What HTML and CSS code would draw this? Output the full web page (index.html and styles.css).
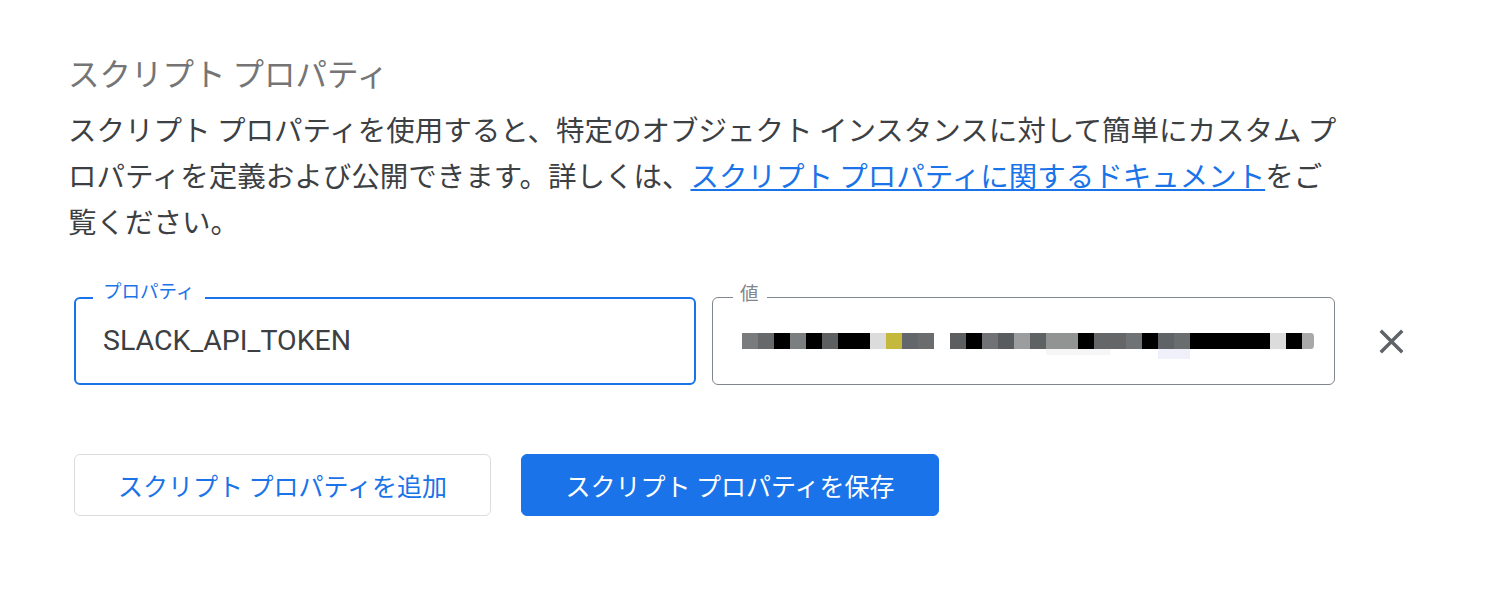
FILE: index.html
```html
<!DOCTYPE html>
<html lang="ja">
<head>
<meta charset="utf-8">
<title>スクリプト プロパティ</title>
<link rel="stylesheet" href="styles.css">
</head>
<body>
<main class="panel">
  <h2 class="title">スクリプト プロパティ</h2>
  <p class="desc">スクリプト プロパティを使用すると、特定のオブジェクト インスタンスに対して簡単にカスタム プ<br>ロパティを定義および公開できます。詳しくは、<a class="link" href="#">スクリプト プロパティに関するドキュメント</a>をご<br>覧ください。</p>

  <div class="row">
    <div class="field field-active">
      <span class="label label-active">プロパティ</span>
      <span class="field-text">SLACK_API_TOKEN</span>
    </div>
    <div class="field field-value">
      <span class="label label-value">値</span>
      <svg class="mosaic" width="572" height="26" viewBox="0 0 572 26" aria-hidden="true">
        <rect x="0" y="0" width="16" height="16" fill="#7a7b7d"/>
        <rect x="16" y="0" width="16" height="16" fill="#66686a"/>
        <rect x="32" y="0" width="16" height="16" fill="#000"/>
        <rect x="48" y="0" width="16" height="16" fill="#7c7f80"/>
        <rect x="64" y="0" width="16" height="16" fill="#000"/>
        <rect x="80" y="0" width="16" height="16" fill="#5c5e60"/>
        <rect x="96" y="0" width="32" height="16" fill="#000"/>
        <rect x="128" y="0" width="16" height="16" fill="#dcdcdc"/>
        <rect x="144" y="0" width="16" height="16" fill="#c4b93c"/>
        <rect x="160" y="0" width="16" height="16" fill="#63666a"/>
        <rect x="176" y="0" width="16" height="16" fill="#6a6c6e"/>
        <rect x="208" y="0" width="16" height="16" fill="#5c5e60"/>
        <rect x="224" y="0" width="16" height="16" fill="#000"/>
        <rect x="240" y="0" width="16" height="16" fill="#707275"/>
        <rect x="256" y="0" width="16" height="16" fill="#595c5e"/>
        <rect x="272" y="0" width="16" height="16" fill="#9c9d9e"/>
        <rect x="288" y="0" width="16" height="16" fill="#5f6263"/>
        <rect x="304" y="0" width="32" height="16" fill="#929494"/>
        <rect x="336" y="0" width="16" height="16" fill="#000"/>
        <rect x="352" y="0" width="32" height="16" fill="#646668"/>
        <rect x="384" y="0" width="16" height="16" fill="#707375"/>
        <rect x="400" y="0" width="16" height="16" fill="#000"/>
        <rect x="416" y="0" width="16" height="16" fill="#606365"/>
        <rect x="432" y="0" width="16" height="16" fill="#6a6d6e"/>
        <rect x="448" y="0" width="80" height="16" fill="#000"/>
        <rect x="528" y="0" width="16" height="16" fill="#dcdcdc"/>
        <rect x="544" y="0" width="16" height="16" fill="#000"/>
        <path d="M560 0h9q3 0 3 4v8q0 4-3 4h-9z" fill="#a9a9a9"/>
        <rect x="304" y="16" width="64" height="6" fill="#f6f6f6"/>
        <rect x="416" y="16" width="32" height="10" fill="#f0f0fa"/>
      </svg>
    </div>
    <button class="icon-btn" type="button" aria-label="削除">
      <svg width="41" height="41" viewBox="0 0 24 24" aria-hidden="true"><path d="M19 6.41L17.59 5 12 10.59 6.41 5 5 6.41 10.59 12 5 17.59 6.41 19 12 13.41 17.59 19 19 17.59 13.41 12z" fill="#5f6368"/></svg>
    </button>
  </div>

  <div class="actions">
    <button class="btn btn-outline" type="button">スクリプト プロパティを追加</button>
    <button class="btn btn-primary" type="button">スクリプト プロパティを保存</button>
  </div>
</main>
</body>
</html>
```
FILE: styles.css
```css
* { box-sizing: border-box; }
html, body { margin: 0; padding: 0; background: #fff; }
body {
  font-family: "Noto Sans CJK JP", "Noto Sans", Roboto, sans-serif;
  color: #3c4043;
}
.panel {
  padding: 51px 0 0 68px;
}
.title {
  margin: 0;
  font-size: 31.5px;
  line-height: 42px;
  font-weight: 400;
  color: #757575;
}
.desc {
  margin: 13px 0 0 0;
  font-size: 28.5px;
  line-height: 46px;
  color: #3c4043;
  white-space: nowrap;
}
.link {
  color: #1a73e8;
  text-decoration: underline;
  text-decoration-thickness: 2px;
  text-underline-offset: 2px;
}
.row {
  display: flex;
  align-items: center;
  margin: 53px 0 0 6px;
}
.field {
  position: relative;
  height: 88px;
  display: flex;
  align-items: center;
  border-radius: 6px;
  background: #fff;
}
.field-active {
  width: 622px;
  border: 2px solid #1a73e8;
  padding-left: 27px;
}
.field-value {
  width: 623px;
  margin-left: 16px;
  border: 1px solid #80868b;
  padding-left: 29px;
}
.label {
  position: absolute;
  background: #fff;
  font-size: 18.5px;
  line-height: 20px;
  white-space: nowrap;
}
.label-active {
  left: 17px;
  top: -19px;
  padding: 0 11px 0 10px;
  color: #1a73e8;
}
.label-value {
  left: 20px;
  top: -16px;
  padding: 0 8px 0 7px;
  color: #80868b;
}
.field-text {
  font-family: Roboto, "Liberation Sans", sans-serif;
  font-size: 28.5px;
  line-height: 34px;
  color: #3c4043;
}
.mosaic {
  display: block;
  margin-top: 10px;
}
.icon-btn {
  margin-left: 36px;
  width: 41px;
  height: 41px;
  padding: 0;
  border: 0;
  background: transparent;
  display: flex;
  align-items: center;
  justify-content: center;
}
.icon-btn svg { display: block; }
.actions {
  display: flex;
  gap: 30px;
  margin: 69px 0 0 6px;
}
.btn {
  height: 62px;
  border-radius: 6px;
  font-family: "Noto Sans CJK JP", sans-serif;
  font-size: 25px;
  font-weight: 400;
  padding: 0;
  display: flex;
  align-items: center;
  justify-content: center;
}
.btn-outline {
  width: 417px;
  background: #fff;
  border: 1px solid #dadce0;
  color: #1a73e8;
}
.btn-primary {
  width: 418px;
  background: #1a73e8;
  border: 1px solid #1a73e8;
  color: #fff;
}
```
